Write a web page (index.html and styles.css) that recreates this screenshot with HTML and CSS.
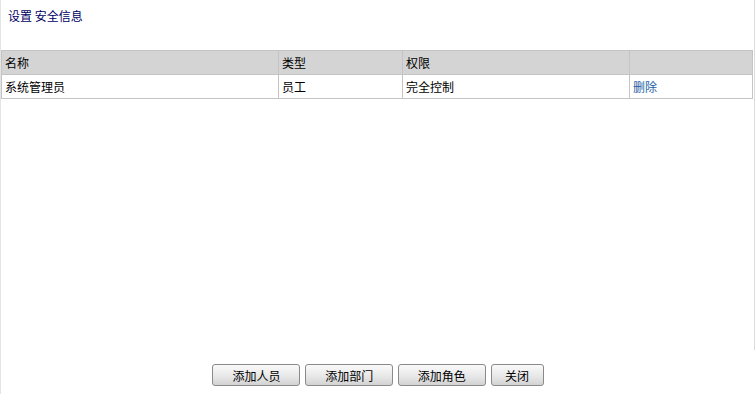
FILE: index.html
```html
<!DOCTYPE html>
<html lang="zh-CN">
<head>
  <meta charset="UTF-8">
  <title>安全信息</title>
  <link rel="stylesheet" href="styles.css">
</head>
<body>
  <div class="page">
    <div class="content">
      <div class="title">设置&nbsp;安全信息</div>
      <table class="grid">
        <tr class="head">
          <td class="c1">名称</td>
          <td class="c2">类型</td>
          <td class="c3">权限</td>
          <td class="c4"></td>
        </tr>
        <tr>
          <td>系统管理员</td>
          <td>员工</td>
          <td>完全控制</td>
          <td><a href="#" class="del">删除</a></td>
        </tr>
      </table>
    </div>
    <div class="actions">
      <button class="btn wide">添加人员</button>
      <button class="btn wide">添加部门</button>
      <button class="btn wide">添加角色</button>
      <button class="btn">关闭</button>
    </div>
  </div>
</body>
</html>
```
FILE: styles.css
```css
body {
  margin: 0;
  font-family: "Noto Sans CJK SC", "Liberation Sans", sans-serif;
  font-size: 12px;
  color: #000;
  background: #fff;
}
.page {
  width: 754px;
  height: 394px;
  border-left: 1px solid #e4e4e4;
  display: flex;
  flex-direction: column;
}
.content {
  height: 350px;
  border-right: 1px solid #dcdcdc;
}
.title {
  color: #000066;
  padding: 9px 0 0 7px;
  line-height: 14px;
  height: 41px;
}
.grid {
  border-collapse: collapse;
  width: 752px;
  table-layout: fixed;
}
.grid td {
  border: 1px solid #c4c4c4;
  height: 23px;
  padding: 0 0 0 3px;
  line-height: 14px;
  white-space: nowrap;
}
.grid .head td {
  background: #d4d4d4;
}
.c1 { width: 273px; }
.c2 { width: 120px; }
.c3 { width: 223px; }
.del {
  color: #1d5fa6;
  text-decoration: none;
}
.actions {
  text-align: center;
  padding-top: 14px;
}
.btn {
  font-family: inherit;
  font-size: 12px;
  height: 22px;
  width: 53px;
  margin: 0 1px;
  padding: 0;
  border: 1px solid #8a8a8a;
  border-radius: 3px;
  background: linear-gradient(#fafafa, #e6e6e6 60%, #d2d2d2);
  color: #000;
  cursor: pointer;
}
.btn.wide {
  width: 88px;
}
```
